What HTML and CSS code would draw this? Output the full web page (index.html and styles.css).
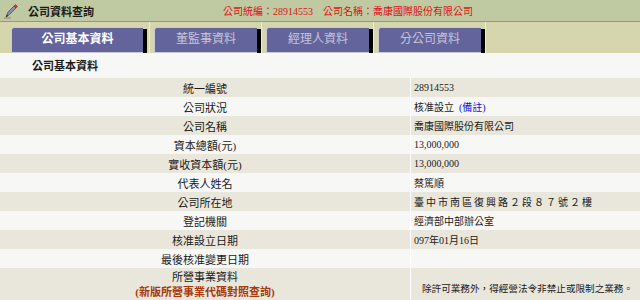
FILE: index.html
```html
<!DOCTYPE html>
<html>
<head>
    <title>公司資料查詢</title>
    <link rel="stylesheet" href="styles.css">
</head>
<body>
    <div class="topbar">
        <svg class="icon" width="16" height="16" viewBox="0 0 16 16">
            <path d="M3 14 L5 9 L11 3 L13 5 L7 11 Z" fill="#8a8fa8" stroke="#4a4e66" stroke-width="0.8"/>
            <path d="M11 3 L12.5 1.5 L14.5 3.5 L13 5 Z" fill="#d83a3a" stroke="#902020" stroke-width="0.6"/>
            <path d="M3 14 L4 11.5 L5.5 13 Z" fill="#333"/>
            <path d="M1 15 L8 15" stroke="#9a8060" stroke-width="1"/>
        </svg>
        <span class="title">公司資料查詢</span>
        <span class="company">公司統編：28914553　公司名稱：喬康國際股份有限公司</span>
    </div>

    <div class="tabs">
        <div class="cell first"><div class="tab active">公司基本資料</div></div>
        <div class="cell"><div class="tab">董監事資料</div></div>
        <div class="cell"><div class="tab">經理人資料</div></div>
        <div class="cell"><div class="tab">分公司資料</div></div>
        <div class="cell rest"></div>
    </div>

    <div class="content">
        <div class="section">公司基本資料</div>
        <table class="info">
            <tr class="odd"><td class="label">統一編號</td><td class="value">28914553</td></tr>
            <tr><td class="label">公司狀況</td><td class="value">核准設立 &nbsp;<a href="#">(備註)</a></td></tr>
            <tr class="odd"><td class="label">公司名稱</td><td class="value">喬康國際股份有限公司</td></tr>
            <tr><td class="label">資本總額(元)</td><td class="value">13,000,000</td></tr>
            <tr class="odd"><td class="label">實收資本額(元)</td><td class="value">13,000,000</td></tr>
            <tr><td class="label">代表人姓名</td><td class="value">蔡篤順</td></tr>
            <tr class="odd"><td class="label">公司所在地</td><td class="value address">臺中市南區復興路２段８７號２樓</td></tr>
            <tr><td class="label">登記機關</td><td class="value">經濟部中部辦公室</td></tr>
            <tr class="odd"><td class="label">核准設立日期</td><td class="value">097年01月16日</td></tr>
            <tr><td class="label">最後核准變更日期</td><td class="value"></td></tr>
            <tr class="odd tall">
                <td class="label">所營事業資料<br><a class="lookup" href="#">(新版所營事業代碼對照查詢)</a></td>
                <td class="value business">除許可業務外，得經營法令非禁止或限制之業務。</td>
            </tr>
        </table>
    </div>
</body>
</html>
```

FILE: styles.css
```css
body {
    margin: 0;
    background-color: #f7f7f5;
    font-family: "Liberation Serif", "Noto Sans CJK TC", serif;
    font-size: 11px;
    color: #1a1a1a;
}
.topbar {
    display: flex;
    align-items: center;
    height: 21px;
    background-color: #bfcaa3;
    border-bottom: 1px solid #8f9c7c;
}
.topbar .icon {
    margin-left: 3px;
}
.topbar .title {
    margin-left: 9px;
    font-weight: bold;
    width: 195px;
}
.topbar .company {
    color: #e01010;
    font-size: 10px;
}
.tabs {
    display: flex;
    height: 31px;
    background-color: #d5d6ad;
    overflow: hidden;
}
.tabs .cell {
    width: 107px;
    border-right: 1px solid #ecedd8;
    padding-left: 4px;
    padding-top: 5px;
}
.tabs .cell.first {
    width: 138px;
    padding-left: 11px;
}
.tabs .cell.rest {
    flex: 1;
    border-right: none;
}
.tab {
    height: 24px;
    width: 102px;
    line-height: 22px;
    text-align: center;
    background-color: #64649c;
    border: 1px solid #c9c9d6;
    border-right: none;
    border-radius: 3px 0 0 0;
    color: #c4c4dc;
    font-size: 12px;
    box-shadow: 4px 2px 0 #000;
}
.tab.active {
    width: 131px;
    color: #fff;
    font-weight: bold;
}
.section {
    height: 25px;
    line-height: 27px;
    padding-left: 32px;
    font-weight: bold;
}
.info {
    width: 100%;
    border-collapse: collapse;
}
.info td {
    height: 19px;
    padding: 0;
}
.info tr.odd td {
    background-color: #e9e7dc;
}
.info .label {
    width: 410px;
    text-align: center;
}
.info .value {
    border-left: 1px solid #fff;
    padding-left: 3px;
    font-size: 10px;
    white-space: nowrap;
}
.info .address {
    letter-spacing: 2px;
}
.info a {
    color: #1010d0;
    text-decoration: none;
}
.info a.lookup {
    color: #a8380a;
    font-weight: bold;
}
.info tr.tall td {
    height: 34px;
    line-height: 15px;
    vertical-align: top;
    padding-top: 2px;
}
.info .business {
    padding-left: 11px;
    padding-top: 13px !important;
    font-size: 9.6px;
}
```
